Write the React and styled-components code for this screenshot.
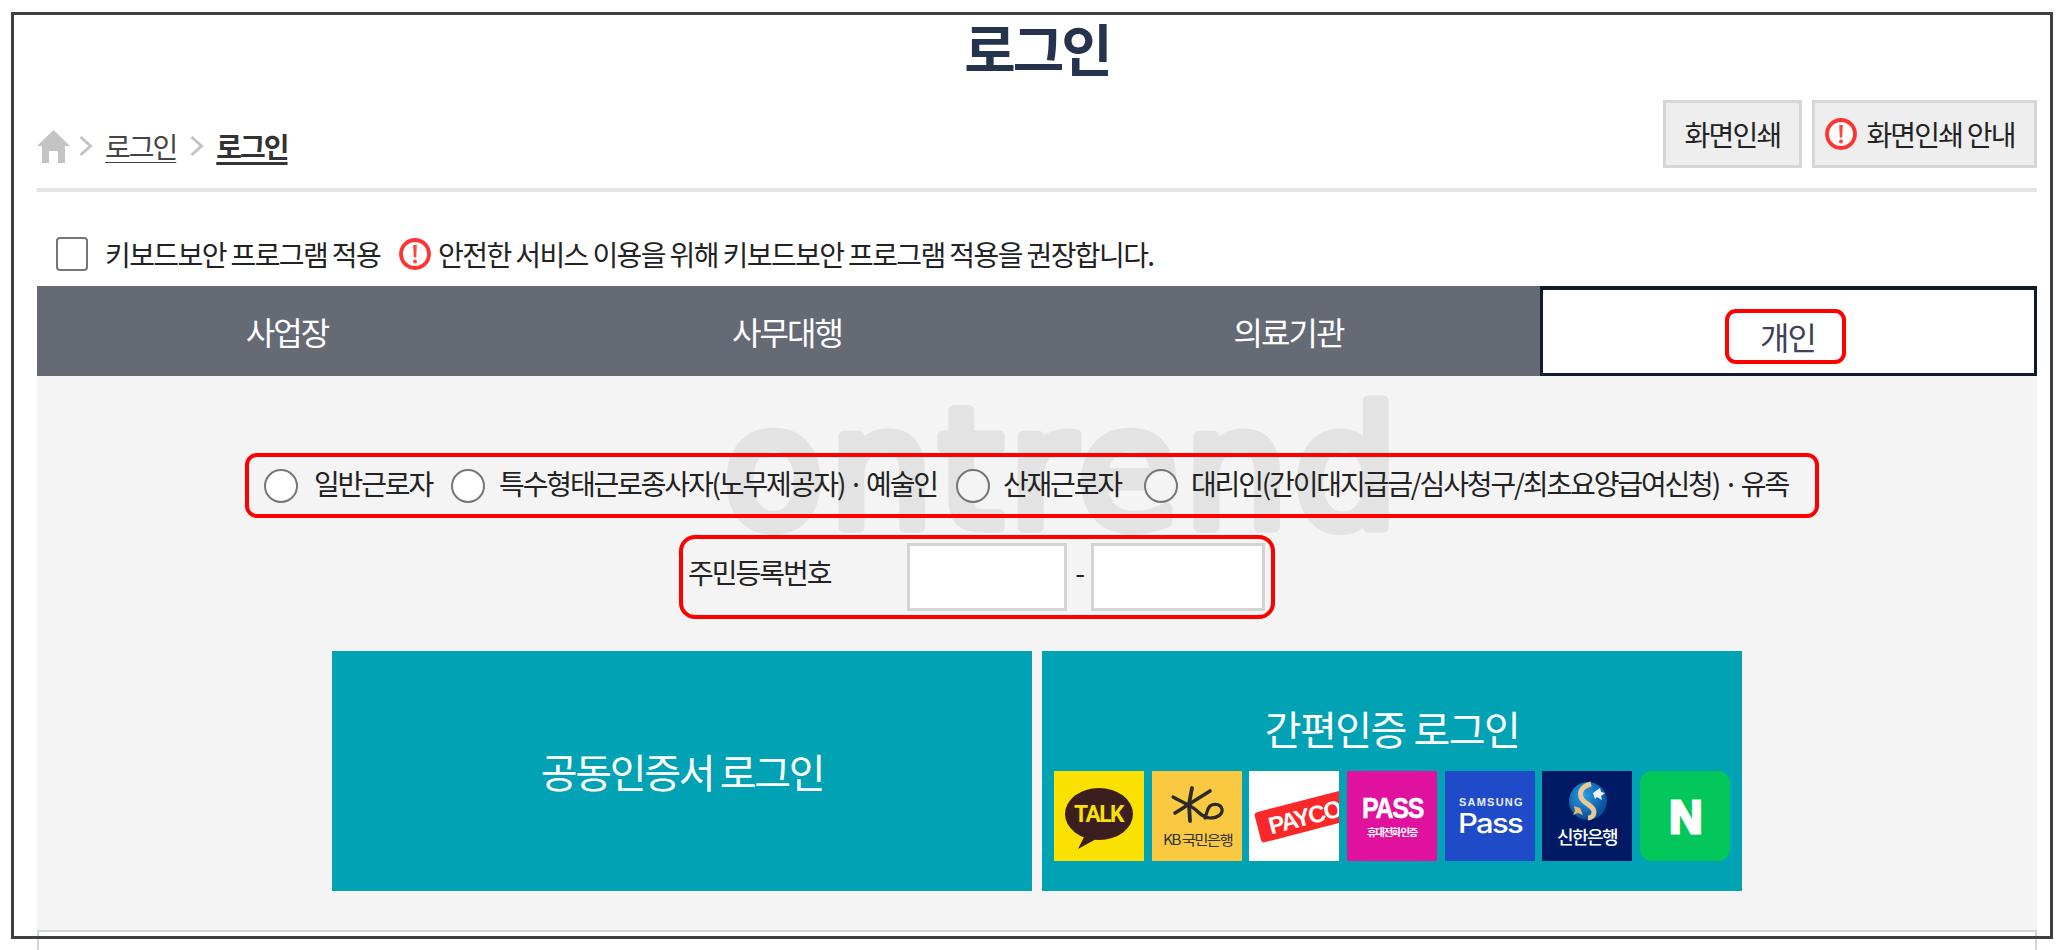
import React from "react";
import styled, { createGlobalStyle } from "styled-components";

const KR = `"Noto Sans CJK KR", "Noto Sans", sans-serif`;

const Global = createGlobalStyle`
  html, body { margin: 0; padding: 0; background: #fff; }
  body { font-family: ${KR}; color: #222; overflow: hidden; }
  * { box-sizing: border-box; }
`;

const Page = styled.div`
  position: relative;
  width: 2064px;
  height: 950px;
  overflow: hidden;
  padding-left: 37px;
`;
const Frame = styled.div`
  position: absolute;
  left: 11px;
  top: 12px;
  width: 2042px;
  height: 927px;
  border: 3px solid #404040;
  pointer-events: none;
  z-index: 5;
`;
const Content = styled.div`
  width: 2000px;
`;
const Title = styled.h1`
  margin: 0;
  height: 96px;
  padding-top: 12px;
  text-align: center;
  font-size: 56px;
  line-height: 70px;
  font-weight: 700;
  letter-spacing: -3px;
  color: #25334f;
`;
const TopBar = styled.div`
  display: flex;
  justify-content: space-between;
  height: 96px;
  padding-top: 4px;
  border-bottom: 4px solid #e5e5e5;
`;
const Crumbs = styled.nav`
  display: flex;
  align-items: center;
  height: 68px;
  padding-top: 24px;
  font-size: 28px;
  letter-spacing: -2px;
  color: #444;
`;
const Crumb = styled.span`
  text-decoration: underline;
  text-decoration-thickness: ${(p) => (p.$current ? "3px" : "1px")};
  text-underline-offset: 4px;
  font-weight: ${(p) => (p.$current ? 700 : 400)};
  color: ${(p) => (p.$current ? "#333" : "#444")};
`;
const Chevron = styled.svg`
  width: 14px;
  height: 24px;
  margin: 0 12px 0 ${(p) => p.$ml}px;
  flex: none;
`;
const PrintGroup = styled.div`
  display: flex;
  gap: 10px;
`;
const PrintButton = styled.button`
  display: flex;
  align-items: center;
  justify-content: center;
  gap: 9px;
  width: ${(p) => p.$w}px;
  height: 68px;
  padding: 0 ${(p) => p.$pr || 0}px 0 0;
  background: #eee;
  border: 3px solid #d6d6d6;
  font-family: ${KR};
  font-size: 28px;
  letter-spacing: -1.8px;
  color: #222;
`;
const SecurityRow = styled.div`
  display: flex;
  align-items: center;
  height: 94px;
  padding: 30px 0 0 19px;
  font-size: 28px;
  letter-spacing: -1.6px;
  color: #222;
`;
const Check = styled.span`
  width: 32px;
  height: 34px;
  border: 2px solid #767676;
  border-radius: 4px;
  background: #fff;
  margin-right: 17px;
  flex: none;
`;
const WarnWrap = styled.span`
  display: inline-flex;
  margin: 0 7px 0 19px;
`;
const Tabs = styled.div`
  display: grid;
  grid-template-columns: 500px 500px 503px 497px;
  height: 90px;
  background: #666a75;
`;
const Tab = styled.div`
  display: flex;
  align-items: center;
  justify-content: center;
  font-size: 32px;
  letter-spacing: -2px;
  color: #fff;
`;
const ActiveTab = styled(Tab)`
  background: #fff;
  border: 3px solid #0f1c2b;
  border-top-width: 4px;
  color: #3d4457;
`;
const Marked = styled.span`
  display: flex;
  align-items: center;
  justify-content: center;
  width: 121px;
  height: 55px;
  margin: 10px 6px 0 0;
  padding: 0 0 2px 4px;
  border: 4px solid #f00;
  border-radius: 11px;
`;
const Panel = styled.div`
  position: relative;
  height: 574px;
  background: #f4f4f4;
  padding-top: 77px;
`;
const Watermark = styled.svg`
  position: absolute;
  left: 640px;
  top: 0;
  width: 800px;
  height: 190px;
`;
const RadioBox = styled.div`
  position: relative;
  display: flex;
  align-items: center;
  width: 1574px;
  height: 65px;
  margin-left: 208px;
  padding-left: 15px;
  border: 4px solid #f00;
  border-radius: 12px;
  font-size: 28px;
  letter-spacing: -2.15px;
  color: #222;
`;
const Radio = styled.span`
  width: 34px;
  height: 34px;
  border: 2px solid #767676;
  border-radius: 50%;
  background: ${(p) => p.$bg};
  margin-right: ${(p) => p.$mr}px;
  flex: none;
`;
const RadioLabel = styled.span`
  margin-right: ${(p) => p.$mr}px;
  margin-top: -5px;
  white-space: nowrap;
`;
const IdBox = styled.div`
  position: relative;
  display: flex;
  align-items: center;
  width: 596px;
  height: 84px;
  margin: 17px 0 0 642px;
  padding-left: 5px;
  border: 4px solid #f00;
  border-radius: 16px;
  font-size: 28px;
  letter-spacing: -2px;
  color: #222;
`;
const IdLabel = styled.span`
  width: 219px;
  flex: none;
  margin-top: -11px;
`;
const IdInput = styled.span`
  width: ${(p) => p.$w}px;
  height: 68px;
  background: #fff;
  border: 3px solid #d4d4d4;
  flex: none;
`;
const Dash = styled.span`
  width: 24px;
  text-align: center;
  flex: none;
  margin-top: -11px;
`;
const LoginRow = styled.div`
  display: flex;
  gap: 10px;
  margin: 32px 0 0 295px;
`;
const LoginCard = styled.div`
  width: 700px;
  height: 240px;
  background: #00a2b4;
  color: #fff;
  font-size: 40px;
`;
const CertLogin = styled(LoginCard)`
  display: flex;
  align-items: center;
  justify-content: center;
  letter-spacing: -2.3px;
`;
const EasyLogin = styled(LoginCard)`
  display: flex;
  flex-direction: column;
  align-items: center;
  padding: 0 12px;
  letter-spacing: -1.5px;
`;
const EasyTitle = styled.div`
  height: 120px;
  line-height: 52px;
  padding-top: 51px;
  white-space: nowrap;
`;
const Logos = styled.div`
  display: flex;
  justify-content: space-between;
  width: 100%;
`;
const LogoTile = styled.svg`
  width: 90px;
  height: 90px;
  display: block;
  flex: none;
  border-radius: ${(p) => p.$radius || 0}px;
`;
const ResultCard = styled.div`
  position: absolute;
  left: 0;
  top: 554px;
  width: 2000px;
  height: 60px;
  background: #fff;
  border: 2px solid #d0d7dc;
`;

const Warn = ({ size }) => (
  <svg width={size} height={size} viewBox="0 0 32 32" aria-hidden="true">
    <circle cx="16" cy="16" r="14" fill="#fff" stroke="#f33" strokeWidth="3.8" />
    <path d="M14.2 7h3.6l-.6 12.5h-2.4z" fill="#f44" />
    <circle cx="16" cy="23.6" r="2" fill="#f44" />
  </svg>
);

const Home = () => (
  <svg width="33" height="33" viewBox="0 0 33 33" aria-hidden="true" style={{ flex: "none" }}>
    <path d="M16.5 0 33 16h-5v17h-7V21h-9v12H5V16H0z" fill="#c4c4c4" />
  </svg>
);

const ChevronIcon = ({ ml }) => (
  <Chevron viewBox="0 0 14 24" aria-hidden="true" $ml={ml}>
    <path d="M1.5 3l10 9-10 9" fill="none" stroke="#c4c4c4" strokeWidth="3" />
  </Chevron>
);

const KakaoLogo = () => (
  <LogoTile viewBox="0 0 90 90">
    <rect width="90" height="90" fill="#fae100" />
    <ellipse cx="45" cy="43" rx="34" ry="26" fill="#3c1e1e" />
    <path d="M32 62 24 78l20-11z" fill="#3c1e1e" />
    <text x="20" y="51" textLength="49" lengthAdjust="spacingAndGlyphs" fontFamily="Roboto, sans-serif" fontWeight="700" fontSize="23" fill="#fae100">TALK</text>
  </LogoTile>
);

const KbLogo = () => (
  <LogoTile viewBox="0 0 90 90">
    <rect width="90" height="90" fill="#f9c941" />
    <g fill="none" stroke="#2c2a26" strokeLinecap="round">
      <path d="M23 42 58 20" strokeWidth="3.6" />
      <path d="M40 17 37 33 38 50" strokeWidth="3.8" />
      <path d="M21 26C30 31 38 34 44 39c4 4 8 8 14 8 8 0 13-4 12-9-1-5-8-6-12-3-3 3-3 7-5 12" strokeWidth="3.2" />
    </g>
    <text x="11" y="74" textLength="69" lengthAdjust="spacingAndGlyphs" fontFamily="'Noto Sans CJK KR', sans-serif" fontSize="14" fill="#333">KB 국민은행</text>
  </LogoTile>
);

const PaycoLogo = () => (
  <LogoTile viewBox="0 0 90 90">
    <rect width="90" height="90" fill="#fff" />
    <g transform="translate(5 42) rotate(-14.5)">
      <rect width="120" height="31" rx="3" fill="#fa2828" />
      <text x="11" y="25" fontFamily="'Liberation Sans', sans-serif" fontWeight="700" fontSize="24" fill="#fff">PAYCO</text>
    </g>
  </LogoTile>
);

const PassLogo = () => (
  <LogoTile viewBox="0 0 90 90">
    <rect width="90" height="90" fill="#e0119d" />
    <text x="15" y="47" textLength="61" lengthAdjust="spacingAndGlyphs" fontFamily="'Liberation Sans', sans-serif" fontWeight="700" fontSize="29" fill="#fff" stroke="#fff" strokeWidth="0.5">PASS</text>
    <text x="45" y="65" textAnchor="middle" fontFamily="'Noto Sans CJK KR', sans-serif" fontWeight="700" fontSize="10.5" fill="#fff">휴대전화 인증</text>
  </LogoTile>
);

const SamsungLogo = () => (
  <LogoTile viewBox="0 0 90 90">
    <rect width="90" height="90" fill="#204bc8" />
    <text x="14" y="35" textLength="62" lengthAdjust="spacing" fontFamily="'Liberation Sans', sans-serif" fontWeight="700" fontSize="11" fill="#e8eeff">SAMSUNG</text>
    <text x="13" y="62" textLength="64" lengthAdjust="spacingAndGlyphs" fontFamily="Inter, sans-serif" fontWeight="500" fontSize="27" fill="#fff">Pass</text>
  </LogoTile>
);

const ShinhanLogo = () => (
  <LogoTile viewBox="0 0 90 90">
    <defs>
      <radialGradient id="sh" cx="0.4" cy="0.35" r="0.7">
        <stop offset="0" stopColor="#2aa0e6" />
        <stop offset="1" stopColor="#05448f" />
      </radialGradient>
    </defs>
    <rect width="90" height="90" fill="#001a66" />
    <circle cx="46" cy="30" r="19" fill="url(#sh)" />
    <path d="M49 13C41 15 37 20 39 26c2 7 13 8 13 15 0 4-3 6-6 6" fill="none" stroke="#e9c996" strokeWidth="5" />
    <path d="M51 22l7-5 1 4 4 1-4 3 1 4-5-3-2 2z" fill="#eef4fb" />
    <path d="M32 35l6 2 3 7-5-2-5 2 2-4z" fill="#e8b873" />
    <text x="45" y="73" textAnchor="middle" fontFamily="'Noto Sans CJK KR', sans-serif" fontWeight="500" fontSize="18" fill="#fff">신한은행</text>
  </LogoTile>
);

const NaverLogo = () => (
  <LogoTile viewBox="0 0 90 90" $radius={12}>
    <rect width="90" height="90" fill="#03c75a" />
    <text x="45" y="61.5" textAnchor="middle" fontFamily="'Liberation Sans', sans-serif" fontWeight="700" fontSize="46" fill="#fff" stroke="#fff" strokeWidth="3">N</text>
  </LogoTile>
);

export default function App() {
  return (
    <Page>
      <Global />
      <Content>
        <Title>로그인</Title>
        <TopBar>
          <Crumbs>
            <Home />
            <ChevronIcon ml={9} />
            <Crumb>로그인</Crumb>
            <ChevronIcon ml={14} />
            <Crumb $current>로그인</Crumb>
          </Crumbs>
          <PrintGroup>
            <PrintButton $w={139}>화면인쇄</PrintButton>
            <PrintButton $w={225} $pr={9}>
              <Warn size={32} />
              화면인쇄 안내
            </PrintButton>
          </PrintGroup>
        </TopBar>
        <SecurityRow>
          <Check />
          키보드보안 프로그램 적용
          <WarnWrap>
            <Warn size={32} />
          </WarnWrap>
          안전한 서비스 이용을 위해 키보드보안 프로그램 적용을 권장합니다.
        </SecurityRow>
        <Tabs>
          <Tab>사업장</Tab>
          <Tab>사무대행</Tab>
          <Tab>의료기관</Tab>
          <ActiveTab>
            <Marked>개인</Marked>
          </ActiveTab>
        </Tabs>
        <Panel>
          <Watermark viewBox="0 0 800 190" aria-hidden="true">
            <text
              x="46"
              y="151"
              fontFamily="'DejaVu Sans', sans-serif"
              fontSize="165"
              letterSpacing="5"
              fill="#e3e3e3"
              stroke="#e3e3e3"
              strokeWidth="11"
              strokeLinejoin="round"
            >
              ontrend
            </text>
          </Watermark>
          <RadioBox>
            <Radio $bg="#fff" $mr={16} />
            <RadioLabel $mr={19}>일반근로자</RadioLabel>
            <Radio $bg="#fff" $mr={14} />
            <RadioLabel $mr={19}>특수형태근로종사자(노무제공자) · 예술인</RadioLabel>
            <Radio $bg="#f4f4f4" $mr={13} />
            <RadioLabel $mr={23}>산재근로자</RadioLabel>
            <Radio $bg="#f4f4f4" $mr={13} />
            <RadioLabel $mr={0}>대리인(간이대지급금/심사청구/최초요양급여신청) · 유족</RadioLabel>
          </RadioBox>
          <IdBox>
            <IdLabel>주민등록번호</IdLabel>
            <IdInput $w={160} />
            <Dash>-</Dash>
            <IdInput $w={174} />
          </IdBox>
          <LoginRow>
            <CertLogin>공동인증서 로그인</CertLogin>
            <EasyLogin>
              <EasyTitle>간편인증 로그인</EasyTitle>
              <Logos>
                <KakaoLogo />
                <KbLogo />
                <PaycoLogo />
                <PassLogo />
                <SamsungLogo />
                <ShinhanLogo />
                <NaverLogo />
              </Logos>
            </EasyLogin>
          </LoginRow>
          <ResultCard />
        </Panel>
      </Content>
      <Frame />
    </Page>
  );
}
